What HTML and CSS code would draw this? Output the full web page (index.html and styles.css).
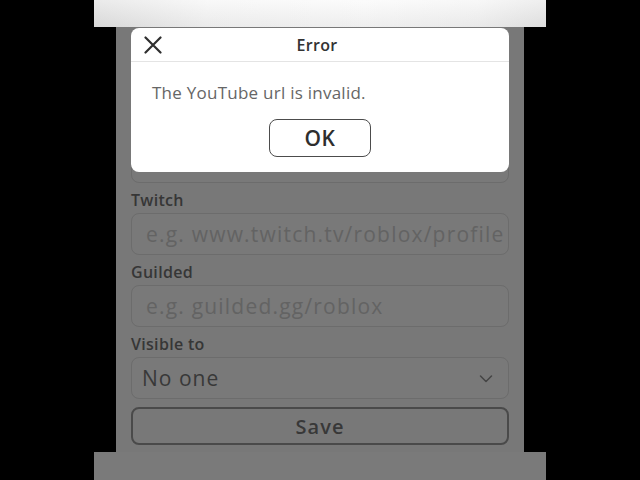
FILE: index.html
```html
<!DOCTYPE html>
<html lang="en">
<head>
<meta charset="utf-8">
<title>Error</title>
<link rel="stylesheet" href="styles.css">
</head>
<body>
<div class="phone">
  <div class="topbar"></div>
  <div class="page">
    <div class="form">
      <div class="group">
        <div class="label">YouTube</div>
        <div class="input"></div>
      </div>
      <div class="group">
        <div class="label">Twitch</div>
        <div class="input"><span class="ph">e.g. www.twitch.tv/roblox/profile</span></div>
      </div>
      <div class="group">
        <div class="label">Guilded</div>
        <div class="input"><span class="ph">e.g. guilded.gg/roblox</span></div>
      </div>
      <div class="group">
        <div class="label">Visible to</div>
        <div class="input select">
          <span class="value">No one</span>
          <svg class="chev" width="14" height="8" viewBox="0 0 14 8"><path d="M1.5 1 L7 6.5 L12.5 1" fill="none" stroke="#454545" stroke-width="1.5" stroke-linecap="round" stroke-linejoin="round"/></svg>
        </div>
      </div>
      <div class="save">Save</div>
    </div>
    <div class="dialog">
      <div class="dlg-head">
        <svg class="close" width="18" height="18" viewBox="0 0 18 18"><path d="M1.5 1.5 L16.5 16.5 M16.5 1.5 L1.5 16.5" fill="none" stroke="#2f2f2f" stroke-width="2.2" stroke-linecap="round"/></svg>
        <span class="dlg-title">Error</span>
      </div>
      <div class="dlg-body">
        <p class="msg">The YouTube url is invalid.</p>
        <div class="ok">OK</div>
      </div>
    </div>
  </div>
  <div class="bottombar"></div>
</div>
</body>
</html>
```
FILE: styles.css
```css
html, body {
  margin: 0;
  padding: 0;
  background: #000;
  width: 640px;
  height: 480px;
  overflow: hidden;
}
body {
  font-family: "Open Sans", "Noto Sans", sans-serif;
}
.phone {
  width: 452px;
  height: 480px;
  margin-left: 94px;
  display: flex;
  flex-direction: column;
}
.topbar {
  height: 27px;
  background:
    linear-gradient(to bottom, rgba(255,255,255,0.5), rgba(220,220,220,0.35)),
    linear-gradient(to right, #d6d6d6, #f2f2f2 25%, #f8f8f8 60%, #f0f0f0 85%, #dedede);
}
.page {
  position: relative;
  height: 425px;
  margin: 0 22px;
  background: #787878;
}
.form {
  padding: 84px 15px 0;
}
.group {
  display: flex;
  flex-direction: column;
}
.label {
  margin: 7px 0 3px;
  height: 20px;
  line-height: 20px;
  font-size: 16px;
  font-weight: 600;
  color: #363636;
  letter-spacing: 0.3px;
}
.input {
  height: 42px;
  box-sizing: border-box;
  border: 1px solid #6c6c6c;
  border-radius: 8px;
  background: #797979;
  display: flex;
  align-items: center;
  padding: 0 14px;
  overflow: hidden;
  white-space: nowrap;
}
.ph {
  font-size: 21px;
  color: #636363;
  letter-spacing: 1.2px;
}
.select {
  justify-content: space-between;
  padding: 0 15px 0 10px;
}
.value {
  font-size: 21px;
  color: #383838;
  letter-spacing: 1px;
}
.chev {
  margin-top: 1px;
}
.save {
  margin-top: 8px;
  height: 38px;
  box-sizing: border-box;
  border: 2px solid #4a4a4a;
  border-radius: 8px;
  display: flex;
  align-items: center;
  justify-content: center;
  font-size: 20px;
  font-weight: 600;
  color: #383838;
  letter-spacing: 1px;
}
.dialog {
  position: absolute;
  top: 1px;
  left: 15px;
  width: 378px;
  height: 144px;
  background: #fff;
  border-radius: 8px;
}
.dlg-head {
  position: relative;
  height: 33px;
  border-bottom: 1.5px solid #e4e4e4;
  display: flex;
  align-items: center;
  justify-content: center;
}
.close {
  position: absolute;
  left: 13px;
  top: 8px;
}
.dlg-title {
  font-size: 16px;
  font-weight: 600;
  color: #333;
  margin-left: -6px;
  letter-spacing: 0.3px;
}
.dlg-body {
  display: flex;
  flex-direction: column;
  align-items: center;
}
.msg {
  align-self: flex-start;
  margin: 19px 0 0 21px;
  font-size: 17px;
  line-height: 24px;
  color: #666;
  letter-spacing: 0.25px;
}
.ok {
  margin-top: 14px;
  width: 102px;
  height: 38px;
  box-sizing: border-box;
  border: 1.5px solid #4c4c4c;
  border-radius: 8px;
  display: flex;
  align-items: center;
  justify-content: center;
  font-size: 21px;
  font-weight: 600;
  color: #2e2e2e;
  letter-spacing: 0.5px;
}
.bottombar {
  height: 28px;
  background: #7a7a7a;
}
```
